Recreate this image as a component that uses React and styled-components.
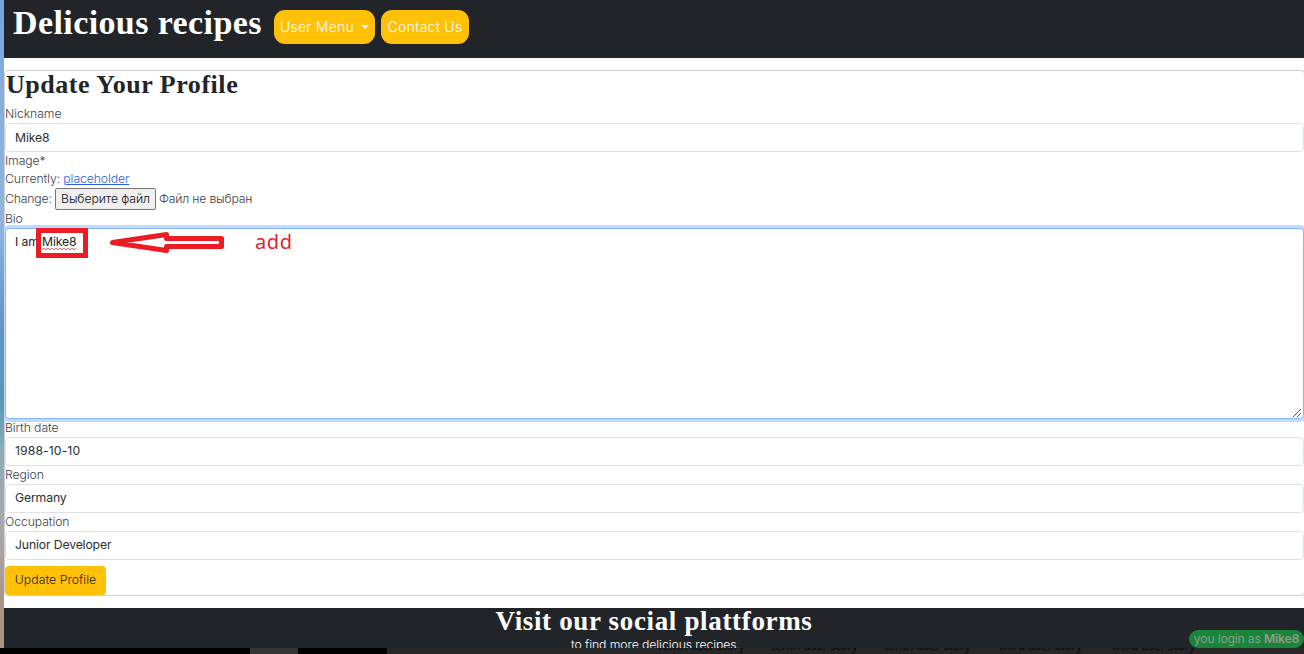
import React from "react";
import styled, { createGlobalStyle } from "styled-components";

const GlobalStyle = createGlobalStyle`
  *, *::before, *::after { box-sizing: border-box; }
  body { margin: 0; background: #fff; overflow: hidden; }
  body, input, textarea, button { font-family: Inter, "Liberation Sans", sans-serif; font-weight: 300; }
`;

const Screen = styled.div`
  position: relative;
  width: 1304px;
  height: 654px;
  display: flex;
  flex-direction: column;
  overflow: hidden;
`;
const Window = styled.div`
  display: flex;
  height: 648px;
`;
const DesktopEdge = styled.div`
  flex: 0 0 4px;
  background: linear-gradient(#73a4df 0, #85afdc 14%, #8fb4de 35%, #6593c7 50%, #5799b3 62%, #8fadb9 70%, #a9a7ac 82%, #a9967e 94%, #a9947f 100%);
`;
const Page = styled.div`
  flex: 1;
  min-width: 0;
  display: flex;
  flex-direction: column;
  overflow: hidden;
  background: #fff;
`;
const Navbar = styled.nav`
  flex: 0 0 58px;
  display: flex;
  align-items: flex-start;
  padding: 0 9px;
  background: #212529;
`;
const Heading = styled.h2`
  margin: 0;
  font-family: "Liberation Serif", serif;
  font-weight: 700;
  white-space: nowrap;
  font-size: ${(p) => p.$size}px;
  line-height: ${(p) => p.$line}px;
  letter-spacing: ${(p) => p.$spacing}px;
  color: ${(p) => p.$color || "#212529"};
`;
const Brand = styled.div`
  width: 261px;
`;
const NavButton = styled.button`
  width: ${(p) => p.$width}px;
  height: 34px;
  margin: 10px 6px 0 0;
  padding: 0 0 1px;
  display: flex;
  align-items: center;
  justify-content: center;
  gap: 7px;
  border: 0;
  border-radius: 11px;
  background: #ffc107;
  color: #fff;
  font-size: 14px;
  letter-spacing: 0.27px;
  white-space: nowrap;
`;
const Caret = styled.span`
  border: 4px solid transparent;
  border-top-color: #fff;
  border-bottom: 0;
`;
const Card = styled.form`
  flex: 0 0 526px;
  margin-top: 12px;
  margin-right: -1px;
  display: flex;
  flex-direction: column;
  border: 1px solid #cfcfcf;
  border-radius: 4px;
`;
const TitleRow = styled.div`
  height: 34px;
  padding-left: 1px;
`;
const Line = styled.div`
  height: ${(p) => p.$height || 18}px;
  padding-bottom: ${(p) => (p.$height ? 0 : 2)}px;
  display: flex;
  align-items: center;
  color: #3c4044;
  font-size: 12.25px;
  letter-spacing: -0.1px;
  white-space: pre;
`;
const Link = styled.a`
  color: #2b62dc;
  text-decoration: underline;
`;
const LineText = styled.span`
  padding-bottom: 2px;
  letter-spacing: -0.19px;
`;
const FileButton = styled.span`
  width: 101px;
  height: 22px;
  margin-right: 3px;
  padding-bottom: 1px;
  display: flex;
  align-items: center;
  justify-content: center;
  border: 1px solid #767676;
  border-radius: 2px;
  background: #efefef;
  color: #111;
`;
const Input = styled.input`
  height: 29px;
  padding: 0 9px ${(p) => (p.$raised ? 3 : 1)}px;
  border: 1px solid #dee2e6;
  border-radius: 4px;
  outline: 0;
  color: #2b2f33;
  font-size: 12.25px;
  font-weight: 400;
  letter-spacing: ${(p) => (p.$numeric ? 0.08 : -0.16)}px;
`;
const BioBox = styled.div`
  position: relative;
  height: 191px;
  padding: 4px 9px;
  border: 1px solid #86b7fe;
  border-radius: 4px;
  box-shadow: 0 0 0 3px #c2dafb;
  background: #fff;
  color: #212529;
  font-size: 12.25px;
  font-weight: 400;
  letter-spacing: -0.15px;
  line-height: 18px;
`;
const Grip = styled.svg`
  position: absolute;
  right: 1px;
  bottom: 0;
`;
const SubmitButton = styled.button`
  width: 101px;
  height: 29px;
  margin-top: 6px;
  padding: 0 0 2px;
  border: 0;
  border-radius: 4px;
  background: #ffc107;
  color: #212529;
  font-size: 12.25px;
  letter-spacing: 0.05px;
`;
const Footer = styled.footer`
  flex: 1;
  margin-top: 12px;
  display: flex;
  flex-direction: column;
  align-items: center;
  background: #212529;
  color: #fff;
  overflow: hidden;
`;
const FooterText = styled.p`
  margin: 1px 0 0 3px;
  font-size: 12.25px;
  line-height: 18px;
  letter-spacing: -0.08px;
  white-space: nowrap;
`;
const Taskbar = styled.div`
  height: 6px;
  display: flex;
  background: #272727;
  overflow: hidden;
`;
const TaskSegment = styled.div`
  flex: 0 0 ${(p) => p.$width}px;
  background: ${(p) => p.$color};
`;
const TaskLabel = styled.span`
  flex: 0 0 auto;
  width: ${(p) => p.$width}px;
  margin-top: -8px;
  color: #070707;
  font: 400 12px/12px "Noto Sans", sans-serif;
  letter-spacing: -0.2px;
  white-space: nowrap;
`;
const LoginBadge = styled.div`
  position: absolute;
  left: 1189px;
  top: 630px;
  width: 115px;
  height: 18px;
  border-radius: 9px;
  background: #1a8538;
  color: #8f9b91;
  font-size: 12.25px;
  font-weight: 400;
  letter-spacing: -0.22px;
  line-height: 18px;
  text-align: center;
  white-space: nowrap;
  b { font-weight: 600; }
`;
const Annotations = styled.svg`
  position: absolute;
  left: 30px;
  top: 222px;
`;
const Note = styled.span`
  position: absolute;
  left: 255px;
  top: 228px;
  color: #d92632;
  font: 400 20px/27px "Noto Sans", sans-serif;
  letter-spacing: 0.6px;
`;

function Field({ label, value, raised, numeric }) {
  return (
    <>
      <Line as="label">{label}</Line>
      <Input defaultValue={value} aria-label={label} $raised={raised} $numeric={numeric} />
    </>
  );
}

export default function App() {
  return (
    <Screen>
      <GlobalStyle />
      <Window>
        <DesktopEdge />
        <Page>
          <Navbar>
            <Brand>
              <Heading as="h1" $size={34} $line={46} $spacing={0.4} $color="#fff">Delicious recipes</Heading>
            </Brand>
            <NavButton $width={101}>User Menu<Caret /></NavButton>
            <NavButton $width={88}>Contact Us</NavButton>
          </Navbar>
          <Card>
            <TitleRow>
              <Heading $size={26} $line={28} $spacing={0.54}>Update Your Profile</Heading>
            </TitleRow>
            <Field label="Nickname" value="Mike8" />
            <Line>Image*</Line>
            <Line>Currently: <Link>placeholder</Link></Line>
            <Line $height={22}>
              <LineText>Change: </LineText>
              <FileButton>Выберите файл</FileButton>
              <LineText>Файл не выбран</LineText>
            </Line>
            <Line>Bio</Line>
            <BioBox>
              I am Mike8
              <Grip width="10" height="10" viewBox="0 0 10 10" stroke="#555" fill="none">
                <path d="M1 9 9 1M5 9 9 5" />
              </Grip>
            </BioBox>
            <Field label="Birth date" value="1988-10-10" raised numeric />
            <Field label="Region" value="Germany" raised />
            <Field label="Occupation" value="Junior Developer" raised />
            <SubmitButton type="button">Update Profile</SubmitButton>
          </Card>
          <Footer>
            <Heading $size={27} $line={27} $spacing={0.66} $color="#fff">Visit our social plattforms</Heading>
            <FooterText>to find more delicious recipes.</FooterText>
          </Footer>
        </Page>
      </Window>
      <Taskbar>
        <TaskSegment $width={250} $color="#000" />
        <TaskSegment $width={48} $color="#353535" />
        <TaskSegment $width={89} $color="#000" />
        <TaskSegment $width={271} $color="#272727" />
        <TaskLabel $width={113}>tenth user story</TaskLabel>
        <TaskLabel $width={113}>tenth user story</TaskLabel>
        <TaskLabel $width={115}>tenth user story</TaskLabel>
        <TaskLabel $width={113}>third user story</TaskLabel>
        <TaskLabel $width={113}>third user story</TaskLabel>
      </Taskbar>
      <LoginBadge>you login as <b>Mike8</b></LoginBadge>
      <Annotations width="200" height="40" viewBox="0 0 200 40" fill="none">
        <path d="M12 28 l2 -2 2 2 2 -2 2 2 2 -2 2 2 2 -2 2 2 2 -2 2 2 2 -2 2 2 2 -2 2 2 2 -2 2 2 2 -2" stroke="#e8686e" />
        <rect x="8.5" y="8.5" width="47" height="25" stroke="#ed1c24" strokeWidth="5" />
        <path d="M82.500 20.500 L136.500 12.500 V16.500 H191.500 V24.500 H136.500 V28.500 Z" stroke="#ed1c24" strokeWidth="5" strokeLinejoin="round" />
      </Annotations>
      <Note>add</Note>
    </Screen>
  );
}
